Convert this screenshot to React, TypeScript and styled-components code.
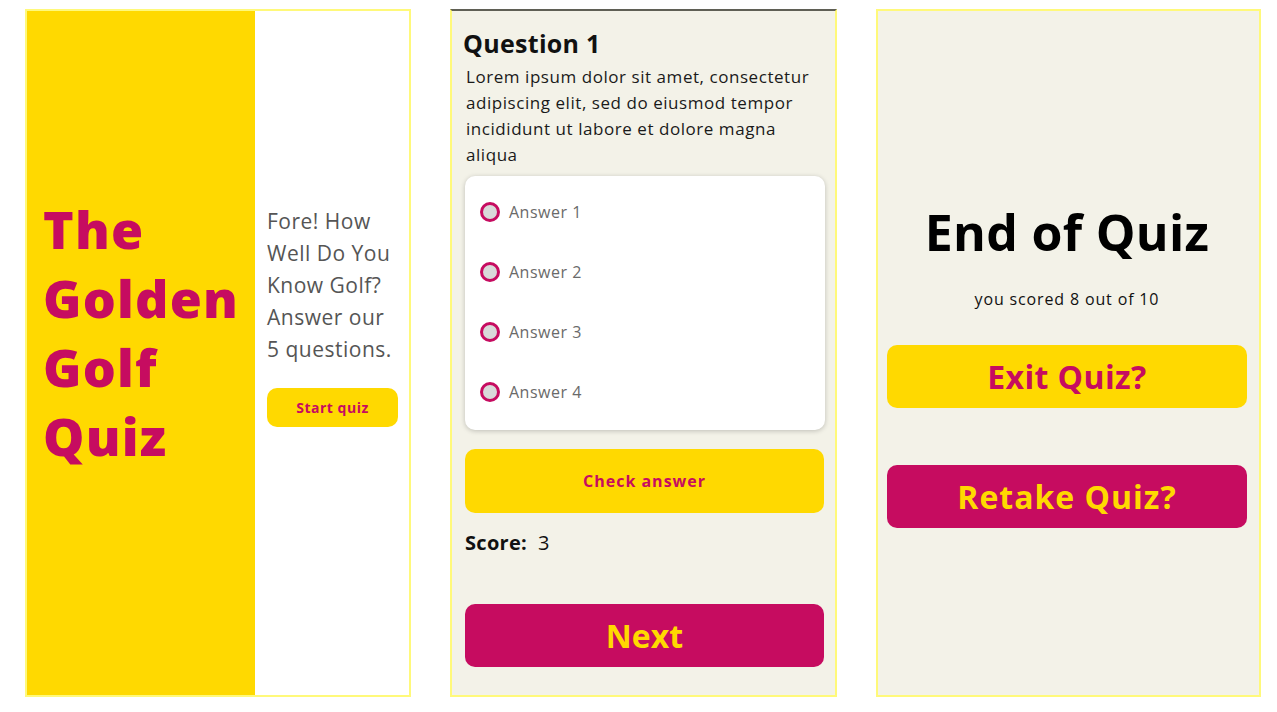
import React from "react";
import styled, { createGlobalStyle } from "styled-components";

const GlobalStyle = createGlobalStyle`
  html, body { margin: 0; padding: 0; background: #ffffff; }
  body { font-family: "Open Sans", "Noto Sans", sans-serif; }
  * { box-sizing: border-box; }
`;

const YELLOW = "#ffd900";
const MAGENTA = "#c60c60";
const CREAM = "#f3f2e8";
const BORDER = "#fff97a";

const Page = styled.div`
  display: flex;
  gap: 39px;
  padding: 9px 16px 0 25px;
  width: 1277px;
  height: 712px;
`;

const Panel = styled.section<{ $bg?: string; $topLine?: boolean; $w?: number }>`
  width: ${(p) => p.$w ?? 386}px;
  height: 688px;
  border: 2px solid ${BORDER};
  ${(p) => (p.$topLine ? "border-top-color: #5f5f55;" : "")}
  background: ${(p) => p.$bg || "#fff"};
  display: flex;
  flex-direction: column;
  flex: none;
`;

const Split = styled.div`
  display: flex;
  flex: 1;
`;

const YellowSide = styled.div`
  width: 230px;
  background: ${YELLOW};
  display: flex;
  flex-direction: column;
  justify-content: center;
  padding: 0 0 42px 16px;
`;

const BigTitle = styled.h1`
  margin: 0;
  font-family: "Open Sans", sans-serif;
  font-weight: 800;
  font-size: 52px;
  line-height: 69px;
  color: ${MAGENTA};
  letter-spacing: 1.2px;
`;

const WhiteSide = styled.div`
  flex: 1;
  display: flex;
  flex-direction: column;
  justify-content: center;
  padding: 0 11px 74px 12px;
`;

const Intro = styled.p`
  margin: 0 0 23px 0;
  font-size: 21px;
  line-height: 32px;
  color: #555555;
  letter-spacing: 0.5px;
`;

const Btn = styled.button<{ $variant: "yellow" | "magenta"; $size: number; $h: number; $ls?: number }>`
  width: 100%;
  height: ${(p) => p.$h}px;
  border: none;
  border-radius: 10px;
  background: ${(p) => (p.$variant === "yellow" ? YELLOW : MAGENTA)};
  color: ${(p) => (p.$variant === "yellow" ? MAGENTA : YELLOW)};
  font-family: "Open Sans", sans-serif;
  font-weight: 700;
  font-size: ${(p) => p.$size}px;
  letter-spacing: ${(p) => p.$ls ?? 0}px;
  display: flex;
  align-items: center;
  justify-content: center;
  padding: 0;
  flex: none;
`;

const SmallBtn = styled(Btn)`
  width: 131px;
`;

const QuizBody = styled.div`
  display: flex;
  flex-direction: column;
  padding: 15px 11px 0 13px;
`;

const QTitle = styled.h2`
  margin: 0 0 0 -2px;
  font-size: 25px;
  line-height: 34px;
  font-weight: 700;
  color: #111;
  letter-spacing: 0.3px;
`;

const QText = styled.p`
  margin: 4px 0 8px 1px;
  font-size: 17px;
  line-height: 26px;
  color: #1a1a1a;
  letter-spacing: 0.55px;
`;

const AnswerCard = styled.div`
  width: 360px;
  height: 254px;
  background: #fff;
  border-radius: 10px;
  box-shadow: 0 1px 5px rgba(0, 0, 0, 0.22);
  display: flex;
  flex-direction: column;
  padding: 6px 0 0 15px;
  flex: none;
`;

const AnswerRow = styled.label`
  display: flex;
  align-items: center;
  gap: 9px;
  height: 60px;
  font-size: 16px;
  color: #6a6a6a;
  letter-spacing: 0.5px;
`;

const Radio = styled.span`
  width: 20px;
  height: 20px;
  border-radius: 50%;
  border: 3px solid ${MAGENTA};
  background: #d9d9d9;
  flex: none;
`;

const Spacer = styled.div<{ $h: number }>`
  height: ${(p) => p.$h}px;
  flex: none;
`;

const ScoreLine = styled.div`
  display: flex;
  align-items: baseline;
  gap: 11px;
  font-size: 20px;
  color: #111;
  line-height: 28px;
  letter-spacing: 0.3px;
`;

const ScoreLabel = styled.span`
  font-weight: 700;
`;

const EndBody = styled.div`
  flex: 1;
  display: flex;
  flex-direction: column;
  align-items: center;
  padding: 189px 12px 0 9px;
`;

const EndTitle = styled.h1`
  margin: 0;
  font-size: 50px;
  line-height: 64px;
  font-weight: 700;
  color: #000;
  letter-spacing: 0.3px;
`;

const EndText = styled.p`
  margin: 24px 0 35px;
  font-size: 16px;
  line-height: 22px;
  color: #111;
  letter-spacing: 0.85px;
`;

const answers = ["Answer 1", "Answer 2", "Answer 3", "Answer 4"];

export default function App() {
  return (
    <>
      <GlobalStyle />
      <Page>
        <Panel>
          <Split>
            <YellowSide>
              <BigTitle>
                The
                <br />
                Golden
                <br />
                Golf
                <br />
                Quiz
              </BigTitle>
            </YellowSide>
            <WhiteSide>
              <Intro>Fore! How Well Do You Know Golf? Answer our 5 questions.</Intro>
              <SmallBtn $variant="yellow" $size={14} $h={39} $ls={0.5}>
                Start quiz
              </SmallBtn>
            </WhiteSide>
          </Split>
        </Panel>

        <Panel $bg={CREAM} $topLine $w={387}>
          <QuizBody>
            <QTitle>Question 1</QTitle>
            <QText>
              Lorem ipsum dolor sit amet, consectetur adipiscing elit, sed do eiusmod tempor incididunt ut labore et
              dolore magna aliqua
            </QText>
            <AnswerCard>
              {answers.map((a) => (
                <AnswerRow key={a}>
                  <Radio />
                  {a}
                </AnswerRow>
              ))}
            </AnswerCard>
            <Spacer $h={19} />
            <Btn $variant="yellow" $size={16} $h={64} $ls={1}>
              Check answer
            </Btn>
            <Spacer $h={16} />
            <ScoreLine>
              <ScoreLabel>Score:</ScoreLabel>
              <span>3</span>
            </ScoreLine>
            <Spacer $h={47} />
            <Btn $variant="magenta" $size={32} $h={63}>
              Next
            </Btn>
          </QuizBody>
        </Panel>

        <Panel $bg={CREAM} $w={385}>
          <EndBody>
            <EndTitle>End of Quiz</EndTitle>
            <EndText>you scored 8 out of 10</EndText>
            <Btn $variant="yellow" $size={32} $h={63} $ls={0.4}>
              Exit Quiz?
            </Btn>
            <Spacer $h={57} />
            <Btn $variant="magenta" $size={32} $h={63} $ls={1}>
              Retake Quiz?
            </Btn>
          </EndBody>
        </Panel>
      </Page>
    </>
  );
}
